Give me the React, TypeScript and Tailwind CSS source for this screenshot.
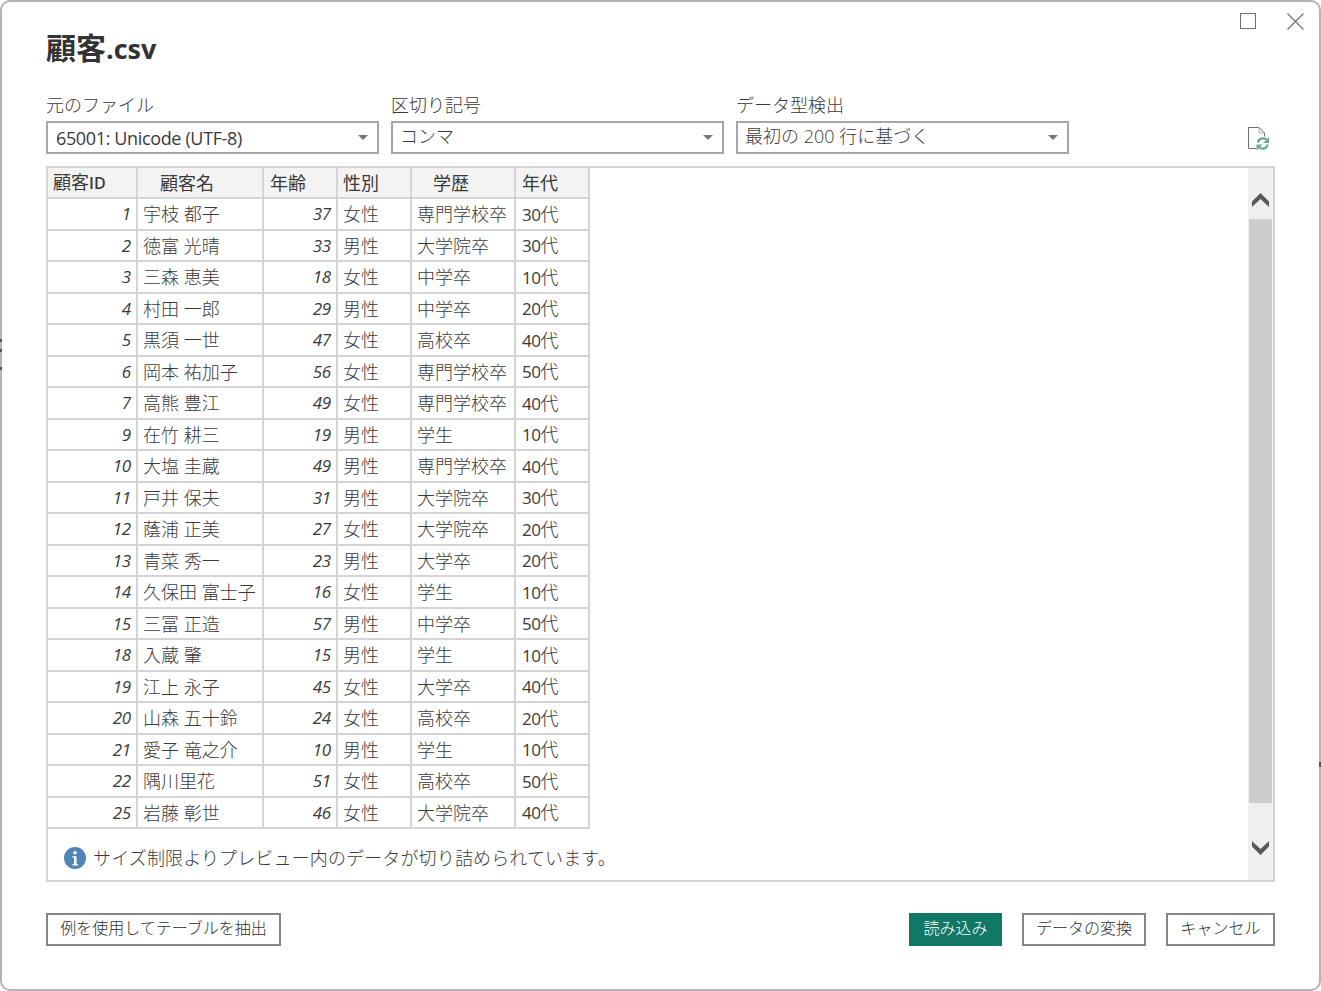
import type { ReactNode } from "react";

const rows: [string, string, string, string, string, string][] = [
  ["1", "宇枝 都子", "37", "女性", "専門学校卒", "30"],
  ["2", "徳富 光晴", "33", "男性", "大学院卒", "30"],
  ["3", "三森 恵美", "18", "女性", "中学卒", "10"],
  ["4", "村田 一郎", "29", "男性", "中学卒", "20"],
  ["5", "黒須 一世", "47", "女性", "高校卒", "40"],
  ["6", "岡本 祐加子", "56", "女性", "専門学校卒", "50"],
  ["7", "高熊 豊江", "49", "女性", "専門学校卒", "40"],
  ["9", "在竹 耕三", "19", "男性", "学生", "10"],
  ["10", "大塩 圭蔵", "49", "男性", "専門学校卒", "40"],
  ["11", "戸井 保夫", "31", "男性", "大学院卒", "30"],
  ["12", "蔭浦 正美", "27", "女性", "大学院卒", "20"],
  ["13", "青菜 秀一", "23", "男性", "大学卒", "20"],
  ["14", "久保田 富士子", "16", "女性", "学生", "10"],
  ["15", "三冨 正造", "57", "男性", "中学卒", "50"],
  ["18", "入蔵 肇", "15", "男性", "学生", "10"],
  ["19", "江上 永子", "45", "女性", "大学卒", "40"],
  ["20", "山森 五十鈴", "24", "女性", "高校卒", "20"],
  ["21", "愛子 竜之介", "10", "男性", "学生", "10"],
  ["22", "隅川里花", "51", "女性", "高校卒", "50"],
  ["25", "岩藤 彰世", "46", "女性", "大学院卒", "40"],
];

const font = "font-['Open_Sans','Noto_Sans_CJK_JP',sans-serif]";

function Select({ children }: { children: ReactNode }) {
  return (
    <div className="flex h-[33px] w-[333px] items-center border-2 border-[#a6a6a6] pl-[7px] pr-[9px] text-[18px] leading-6 text-[#3a3a3a]">
      <span className="flex-1 font-light">{children}</span>
      <span className="h-0 w-0 border-x-[5px] border-t-[5px] border-x-transparent border-t-[#777]" />
    </div>
  );
}

function Field({ label, children }: { label: string; children: ReactNode }) {
  return (
    <div className="flex flex-col">
      <div className="h-[28px] text-[18px] leading-[24px] font-light text-[#3a3a3a]">{label}</div>
      <Select>{children}</Select>
    </div>
  );
}

const th = "border-r-2 border-b-2 border-[#d4d4d4] bg-[#f3f3f3] p-0 font-normal text-[#3a3a3a] text-left";
const td = "border-r-2 border-b-2 border-[#d4d4d4] p-0 pt-[1px] font-light text-[#3a3a3a] whitespace-nowrap";
const num = `${td} pr-[5px] text-right text-[17px] tracking-[-0.2px] font-normal italic`;

function Btn({ children, w }: { children: string; w: string }) {
  return (
    <button className={`flex h-[33px] items-center justify-center border-2 border-[#858585] bg-white pb-[3px] text-[16px] font-light text-[#2e2e2e] ${w}`}>
      {children}
    </button>
  );
}

export default function App() {
  return (
    <div className={`relative flex h-[991px] w-[1321px] flex-col rounded-[10px] border-2 border-[#b4b4b4] bg-white pl-[44px] pr-[44px] ${font}`}>
      <span className="absolute left-[-2px] top-[337px] h-[3px] w-[2px] bg-[#555]" />
      <span className="absolute left-[-2px] top-[347px] h-[3px] w-[2px] bg-[#555]" />
      <span className="absolute left-[-2px] top-[365px] h-[3px] w-[2px] bg-[#555]" />
      <span className="absolute right-[-2px] top-[760px] h-[5px] w-[2px] bg-[#555]" />

      <div className="absolute right-[15px] top-[11px] flex items-start gap-[31px]">
        <div className="h-[16px] w-[16px] border border-[#6e6e6e]" />
        <svg width="17" height="17" viewBox="0 0 17 17" fill="none" stroke="#6e6e6e" strokeWidth="1.1">
          <path d="M.5.5l16 16M16.500.5l-16 16" />
        </svg>
      </div>

      <h1 className="mt-[27px] h-[38px] text-[30px] leading-[38px] font-bold text-[#333]">
        顧客<span className="text-[27px]">.csv</span>
      </h1>

      <div className="mt-[26px] flex items-end gap-3">
        <Field label="元のファイル">
          <span className="ml-[1px] font-normal tracking-[-0.36px]">65001: Unicode (UTF-8)</span>
        </Field>
        <Field label="区切り記号">
          <span className="relative top-[-2px]">コンマ</span>
        </Field>
        <Field label="データ型検出">
          <span className="relative top-[-2px]">最初の 200 行に基づく</span>
        </Field>
        <svg className="mb-[3px] ml-auto mr-[5px]" width="22" height="24" viewBox="0 0 22 24" fill="none">
          <path d="M8 21.500H.5V.5H11l5.500 5.500v3.500" stroke="#6e6e6e" strokeWidth="1" />
          <path d="M11 .5V6h5.500" stroke="#a8a8a8" strokeWidth="1" />
          <path d="M9.800 15.500a5.300 5.300 0 0 1 8.500-3" stroke="#66a893" strokeWidth="2.200" />
          <path d="M19.800 17.500a5.300 5.300 0 0 1-8.500 3" stroke="#66a893" strokeWidth="2.200" />
          <path d="M21 10v6h-6zM8.500 23.500v-6h6z" fill="#66a893" />
        </svg>
      </div>

      <div className="mt-3 flex h-[716px] border-2 border-[#d4d4d4]">
        <div className="flex min-w-0 flex-1 flex-col">
          <table className="w-[542px] table-fixed border-separate border-spacing-0 text-[18px] leading-6">
            <colgroup>
              <col className="w-[90px]" />
              <col className="w-[126px]" />
              <col className="w-[74px]" />
              <col className="w-[74px]" />
              <col className="w-[104px]" />
              <col className="w-[74px]" />
            </colgroup>
            <thead>
              <tr className="h-[31px]">
                <th className={`${th} pl-[5px]`}>顧客<span className="text-[16px] font-semibold">ID</span></th>
                <th className={`${th} pl-[22px]`}>顧客名</th>
                <th className={`${th} pl-[6px]`}>年齢</th>
                <th className={`${th} pl-[5px]`}>性別</th>
                <th className={`${th} pl-[21px]`}>学歴</th>
                <th className={`${th} pl-[6px]`}>年代</th>
              </tr>
            </thead>
            <tbody>
              {rows.map((r) => (
                <tr key={r[0]} className="h-[31.5px]">
                  <td className={num}>{r[0]}</td>
                  <td className={`${td} pl-[5px]`}>{r[1]}</td>
                  <td className={num}>{r[2]}</td>
                  <td className={`${td} pl-[5px]`}>{r[3]}</td>
                  <td className={`${td} pl-[5px]`}>{r[4]}</td>
                  <td className={`${td} pl-[6px]`}>
                    <span className="text-[17px] font-normal tracking-[-0.5px]">{r[5]}</span>代
                  </td>
                </tr>
              ))}
            </tbody>
          </table>
          <div className="flex flex-1 items-center pt-[7px] pl-[16px]">
            <svg width="22" height="22" viewBox="0 0 22 22">
              <circle cx="11" cy="11" r="11" fill="#4f84b8" />
              <circle cx="11" cy="5.800" r="1.800" fill="#fff" />
              <path d="M8.500 9h4v8h1.500v1.500H8.500V17H10v-6.500H8.500z" fill="#fff" />
            </svg>
            <span className="ml-[7px] text-[18px] font-light tracking-[0.14px] text-[#3a3a3a]">サイズ制限よりプレビュー内のデータが切り詰められています。</span>
          </div>
        </div>
        <div className="flex w-[25px] flex-col items-center bg-[#efefef]">
          <svg className="mt-[25px]" width="17" height="14" viewBox="0 0 17 14">
            <path d="M0 8.500L8.500 0 17 8.500V14L8.500 6 0 14z" fill="#595959" />
          </svg>
          <div className="mt-[12px] h-[584px] w-[23px] bg-[#cdcdcd]" />
          <svg className="mt-[38px]" width="17" height="14" viewBox="0 0 17 14">
            <path d="M0 5.500L8.500 14 17 5.500V0L8.500 8 0 0z" fill="#595959" />
          </svg>
        </div>
      </div>

      <div className="mt-[31px] flex items-center">
        <Btn w="w-[235px]">例を使用してテーブルを抽出</Btn>
        <button className="ml-auto flex h-[33px] w-[93px] items-center justify-center bg-[#117865] pb-[3px] text-[16px] font-light text-white">読み込み</button>
        <div className="ml-5"><Btn w="w-[124px]">データの変換</Btn></div>
        <div className="ml-5"><Btn w="w-[109px]">キャンセル</Btn></div>
      </div>
    </div>
  );
}
